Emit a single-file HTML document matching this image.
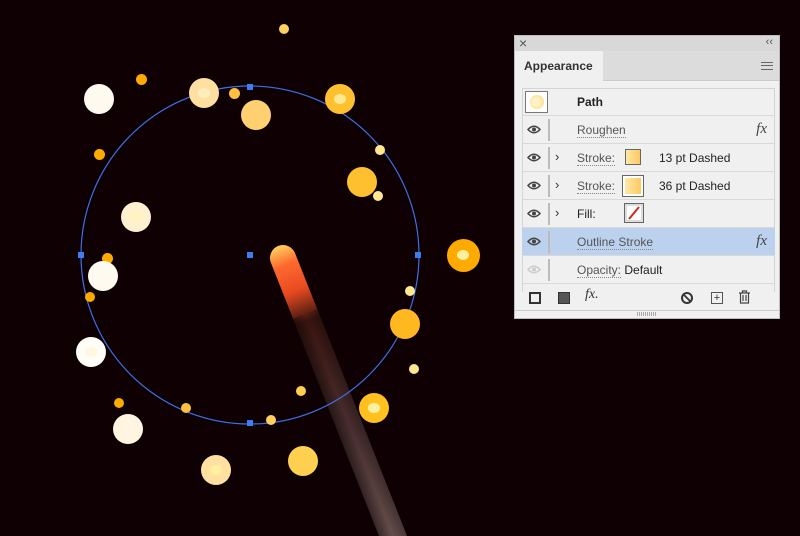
<!DOCTYPE html>
<html style="overflow:hidden;width:800px;height:536px"><head><style>
*{margin:0;padding:0;box-sizing:border-box}
body{width:800px;height:536px;background:#0f0003;position:relative;overflow:hidden;font-family:"Liberation Sans",sans-serif}
.d{position:absolute;border-radius:50%}
#panel{position:absolute;left:514px;top:35px;width:266px;height:284px;background:#f0f0f0;border:1px solid #bdbdbd}
.row{position:absolute;left:7px;width:253px;height:28px;border-bottom:1px solid #d9d9d9;font-size:12px;color:#222}
.row .t{position:absolute;left:55px;top:7px}
.u{color:#555;border-bottom:1px dotted #888}
.eye{position:absolute;left:5px;top:9px;width:14px;height:9px}
.bar{position:absolute;left:26px;top:3px;width:2px;height:22px;background:#bbb}
.chev{position:absolute;left:33px;top:5px;font-size:13px;color:#333}
.fx{position:absolute;right:8px;top:5px;font-style:italic;font-family:"Liberation Serif",serif;font-size:15px;color:#444}
.sw{position:absolute;top:5px;width:16px;height:16px;border:1px solid #666;background:linear-gradient(90deg,#ffe9a8,#ffc860)}
</style></head><body>
<svg width="800" height="536" style="position:absolute;left:0;top:0;display:block">
<defs>
<linearGradient id="wg" x1="0" y1="0" x2="0" y2="1">
<stop offset="0" stop-color="#ffd060"/><stop offset="0.05" stop-color="#ff6a30"/><stop offset="0.12" stop-color="#e84a20"/><stop offset="0.2" stop-color="#3a1510"/><stop offset="0.5" stop-color="#4a3030"/><stop offset="1" stop-color="#7a6560"/>
</linearGradient>
<linearGradient id="wh" x1="0" y1="0" x2="1" y2="0">
<stop offset="0" stop-color="#000" stop-opacity=".45"/><stop offset="0.5" stop-color="#000" stop-opacity="0"/><stop offset="1" stop-color="#000" stop-opacity=".3"/>
</linearGradient>
</defs>
<g transform="translate(283,258) rotate(-21.6)">
<rect x="-13" y="-13" width="26" height="400" rx="13" fill="url(#wg)"/>
<rect x="-13" y="60" width="26" height="340" fill="url(#wh)"/>
</g>
<circle cx="250" cy="255" r="169" fill="none" stroke="#3f6fe8" stroke-width="1.2"/>
<g fill="#3f7cf0">
<rect x="247" y="84" width="6" height="6"/><rect x="247" y="420" width="6" height="6"/>
<rect x="78" y="252" width="6" height="6"/><rect x="415" y="252" width="6" height="6"/>
<rect x="247" y="252" width="6" height="6"/>
</g>
</svg>
<div id="dots"></div>
<script>
const D=[[284,29,5,'#ffd060'],[141,79,5.5,'#ffaa00'],[99,99,15,'#fffaef'],[204,93,15,'#ffe0a0','#ffeebb'],[234,93,5.5,'#ffc040'],[256,115,15,'#ffd070'],[340,99,15,'#ffc030','#ffe890'],[99,154,5.5,'#ffaa00'],[380,150,5,'#ffe890'],[362,182,15,'#ffc030'],[378,196,5,'#ffe890'],[136,217,15,'#fff0d0','#fff4c0'],[463,255,16.5,'#ffaa00','#fff0a0'],[107,258,5.5,'#ffaa00'],[103,276,15,'#fffaf0'],[90,297,5,'#ffaa00'],[410,291,5,'#ffe890'],[405,324,15,'#ffb820'],[91,352,15,'#fffdf5','#fff8e0'],[414,369,5,'#ffe890'],[301,391,5,'#ffd050'],[374,408,15,'#ffc020','#fff0a0'],[119,403,5,'#ffaa00'],[186,408,5,'#ffc040'],[271,420,5,'#ffd060'],[128,429,15,'#fff5e0'],[216,470,15,'#ffe0a0','#fff0a0'],[303,461,15,'#ffd050']];
let h='';for(const d of D){h+=`<div class="d" style="left:${d[0]-d[2]}px;top:${d[1]-d[2]}px;width:${d[2]*2}px;height:${d[2]*2}px;background:${d[3]}"></div>`;if(d[4]){const r=d[2]*0.38;h+=`<div class="d" style="left:${d[0]-r}px;top:${d[1]-r*0.85}px;width:${r*2}px;height:${r*1.7}px;background:${d[4]}"></div>`}}
document.getElementById('dots').innerHTML=h;
</script>
<div id="panel">
<div style="position:absolute;left:0;top:0;width:264px;height:15px;background:#d8d8d8"></div>
<div style="position:absolute;left:4px;top:-1px;font-size:14px;color:#555">×</div>
<div style="position:absolute;right:6px;top:0px;font-size:11px;color:#555">‹‹</div>
<div style="position:absolute;left:0;top:15px;width:264px;height:30px;background:#dcdcdc;border-bottom:1px solid #ccc"></div>
<div style="position:absolute;left:0;top:15px;width:88px;height:31px;background:#f0f0f0;font-size:12px;font-weight:bold;color:#333;padding:8px 0 0 9px">Appearance</div>
<div style="position:absolute;right:6px;top:26px;width:12px;height:8px;border-top:1px solid #666;border-bottom:1px solid #666"></div>
<div style="position:absolute;right:6px;top:29px;width:12px;height:1px;background:#666"></div>
<div style="position:absolute;left:7px;top:52px;width:253px;height:204px;border:1px solid #d4d4d4;border-bottom:none"></div>
<div class="row" style="top:52px"><div style="position:absolute;left:3px;top:3px;width:23px;height:22px;border:1px solid #777;background:#fff"><div style="position:absolute;left:4px;top:3px;width:14px;height:14px;border-radius:50%;background:radial-gradient(circle at 45% 50%,#fff4c8 30%,#ffd070)"></div></div><span class="t" style="font-weight:bold">Path</span></div>
<div class="row" style="top:80px"><svg class="eye" viewBox="0 0 14 9"><path d="M1 4.5Q7-2 13 4.5Q7 11 1 4.5Z" fill="none" stroke="#444" stroke-width="1.5"/><circle cx="7" cy="4.5" r="2" fill="#444"/></svg><div class="bar"></div><span class="t u">Roughen</span><span class="fx">fx</span></div>
<div class="row" style="top:108px"><svg class="eye" viewBox="0 0 14 9"><path d="M1 4.5Q7-2 13 4.5Q7 11 1 4.5Z" fill="none" stroke="#444" stroke-width="1.5"/><circle cx="7" cy="4.5" r="2" fill="#444"/></svg><div class="bar"></div><span class="chev">›</span><span class="t u">Stroke:</span><div class="sw" style="left:103px"></div><span class="t" style="left:137px">13 pt Dashed</span></div>
<div class="row" style="top:136px"><svg class="eye" viewBox="0 0 14 9"><path d="M1 4.5Q7-2 13 4.5Q7 11 1 4.5Z" fill="none" stroke="#444" stroke-width="1.5"/><circle cx="7" cy="4.5" r="2" fill="#444"/></svg><div class="bar"></div><span class="chev">›</span><span class="t u">Stroke:</span><div class="sw" style="left:101px;top:4px;width:20px;height:20px;border:2px solid #fff;outline:1px solid #666"></div><span class="t" style="left:137px">36 pt Dashed</span></div>
<div class="row" style="top:164px"><svg class="eye" viewBox="0 0 14 9"><path d="M1 4.5Q7-2 13 4.5Q7 11 1 4.5Z" fill="none" stroke="#444" stroke-width="1.5"/><circle cx="7" cy="4.5" r="2" fill="#444"/></svg><div class="bar"></div><span class="chev">›</span><span class="t">Fill:</span><div style="position:absolute;left:102px;top:3px;width:20px;height:20px;border:1px solid #666;background:#fff;box-shadow:inset 0 0 0 2px #ddd"><svg width="18" height="18" style="position:absolute;left:0;top:0"><line x1="4" y1="15" x2="14" y2="3" stroke="#d0281c" stroke-width="2"/></svg></div></div>
<div class="row" style="top:192px;background:#bcd1ee"><svg class="eye" viewBox="0 0 14 9"><path d="M1 4.5Q7-2 13 4.5Q7 11 1 4.5Z" fill="none" stroke="#444" stroke-width="1.5"/><circle cx="7" cy="4.5" r="2" fill="#444"/></svg><div class="bar"></div><span class="t u">Outline Stroke</span><span class="fx">fx</span></div>
<div class="row" style="top:220px"><svg class="eye" viewBox="0 0 14 9"><path d="M1 4.5Q7-2 13 4.5Q7 11 1 4.5Z" fill="none" stroke="#ccc" stroke-width="1.5"/><circle cx="7" cy="4.5" r="2" fill="#ccc"/></svg><div class="bar"></div><span class="t"><span class="u">Opacity:</span> Default</span></div>
<div style="position:absolute;left:14px;top:256px;width:12px;height:12px;border:2px solid #333"></div>
<div style="position:absolute;left:43px;top:256px;width:12px;height:12px;border:1px solid #333;background:#555"></div>
<div style="position:absolute;left:70px;top:251px;font-style:italic;font-family:'Liberation Serif',serif;font-size:14px;color:#333">fx.</div>
<div style="position:absolute;left:166px;top:256px;width:12px;height:12px;border:2px solid #333;border-radius:50%"></div>
<svg width="12" height="12" style="position:absolute;left:166px;top:256px"><line x1="2" y1="2" x2="10" y2="10" stroke="#333" stroke-width="1.8"/></svg>
<div style="position:absolute;left:196px;top:256px;width:12px;height:12px;border:1px solid #555;font-size:11px;line-height:10px;text-align:center;color:#333">+</div>
<svg width="13" height="14" style="position:absolute;left:223px;top:254px"><path d="M1 3H12M4.5 3V1H8.5V3M2.5 3V13H10.5V3M5 5V11M8 5V11" fill="none" stroke="#444" stroke-width="1.2"/></svg>
<div style="position:absolute;left:0;top:274px;width:264px;height:1px;background:#ccc"></div>
<div style="position:absolute;left:122px;top:276px;width:20px;height:4px;background:repeating-linear-gradient(90deg,#aaa 0 1px,transparent 1px 2px)"></div>
</div>
</body></html>
